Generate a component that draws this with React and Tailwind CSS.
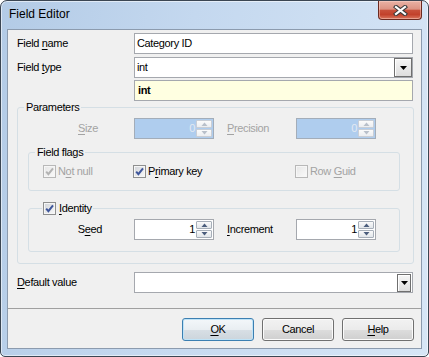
import React from "react";

function U({ children }) {
  return <span className="underline decoration-1 underline-offset-[2px]">{children}</span>;
}

function CloseBtn() {
  return (
    <div className="w-[44px] h-[19px] rounded-b-[4px] border border-t-0 border-[#6b2a20] bg-[linear-gradient(to_bottom,#e9b2a5_0%,#dc9383_45%,#c8503a_52%,#c2412b_75%,#d9755d_100%)] shadow-[inset_0_0_0_1px_rgba(255,220,210,0.45)] flex items-center justify-center">
      <svg width="15" height="11" viewBox="0 0 15 11">
        <path d="M3 2 L12 9 M12 2 L3 9" stroke="#3a3a3a" strokeWidth="4.2" strokeLinecap="square" />
        <path d="M3 2 L12 9 M12 2 L3 9" stroke="#ffffff" strokeWidth="2.2" strokeLinecap="square" />
      </svg>
    </div>
  );
}

function DropBtn({ small }) {
  return (
    <div
      className={`${small ? "w-[14px] h-[18px] mt-[1px] mr-[1px]" : "w-[18px] h-full"} shrink-0 border border-[#6f6f6f] bg-[linear-gradient(to_bottom,#f6f6f6,#dddddd)] shadow-[inset_1px_1px_0_#ffffff] flex items-center justify-center`}
    >
      <svg width="7" height="4" viewBox="0 0 7 4">
        <path d="M0 0 H7 L3.5 4 Z" fill="#000" />
      </svg>
    </div>
  );
}

function SpinBtn({ up, disabled }) {
  return (
    <div
      className={`h-[8px] border rounded-[1px] flex items-center justify-center ${
        disabled
          ? "border-[#c9ced6] bg-[linear-gradient(to_bottom,#fbfbfb,#eceef1)]"
          : "border-[#a7afb9] bg-[linear-gradient(to_bottom,#fafafa,#e2e6ea)]"
      }`}
    >
      <svg width="7" height="4" viewBox="0 0 7 4">
        <path d={up ? "M0.5 4 H6.5 L3.5 0.5 Z" : "M0.5 0 H6.5 L3.5 3.5 Z"} fill={disabled ? "#b9c0ca" : "#4b5d7c"} />
      </svg>
    </div>
  );
}

function Spinner({ value, disabled }) {
  return (
    <div
      className={`w-[80px] h-[21px] shrink-0 border flex ${
        disabled ? "border-[#a3adb9] bg-[#afcdee]" : "border-[#a5a8ae] bg-white"
      }`}
    >
      <div className={`flex-1 flex items-center justify-end pr-[1px] ${disabled ? "text-[#e2e9f2]" : "text-black"}`}>
        {value}
      </div>
      <div className="w-[16px] flex flex-col gap-[1px] my-[1px] mr-[1px]">
        <SpinBtn up disabled={disabled} />
        <SpinBtn disabled={disabled} />
      </div>
    </div>
  );
}

function Check({ checked, disabled }) {
  return (
    <span
      className={`w-[13px] h-[13px] shrink-0 border flex items-center justify-center ${
        disabled
          ? "border-[#b8b8b8] bg-[linear-gradient(135deg,#e6e6e6,#fafafa)]"
          : "border-[#8e8f8f] bg-[linear-gradient(135deg,#d0d3d8,#fafafa)]"
      } shadow-[inset_0_0_0_1px_#f6f6f6]`}
    >
      {checked && (
        <svg width="11" height="11" viewBox="0 0 11 11">
          <path
            d="M2.2 5.6 L4.4 8.2 L9 2.4"
            fill="none"
            stroke={disabled ? "#b3b3b3" : "#3e569b"}
            strokeWidth="2"
          />
        </svg>
      )}
    </span>
  );
}

function Button({ children, focused }) {
  return (
    <div
      className={`w-[72px] h-[23px] rounded-[3px] border flex items-center justify-center ${
        focused
          ? "border-[#3c7fb1] shadow-[inset_0_0_0_1px_#bfe3f7] bg-[linear-gradient(to_bottom,#f3f7fa_0%,#e9eef2_50%,#d8dfe5_51%,#ccd5dc_100%)]"
          : "border-[#707070] shadow-[inset_0_0_0_1px_#fbfbfb] bg-[linear-gradient(to_bottom,#f2f2f2_0%,#ebebeb_50%,#dddddd_51%,#cfcfcf_100%)]"
      }`}
    >
      {children}
    </div>
  );
}

export default function App() {
  return (
    <div className="w-[429px] h-[357px] font-['Liberation_Sans',Arial,sans-serif] text-[11px] leading-[13px] text-black tracking-[-0.35px]">
      <div className="w-full h-full flex flex-col rounded-t-[7px] rounded-b-[5px] border border-[#3b4653] bg-[linear-gradient(100deg,#b3cbe6_0%,#c4d8ef_40%,#d7e6f6_100%)] shadow-[inset_0_0_0_1px_rgba(255,255,255,0.55)]">
        <div className="h-[28px] shrink-0 flex items-start justify-between pl-[8px] pr-[6px]">
          <span className="mt-[6px] text-[12px] leading-[14px] tracking-normal">Field Editor</span>
          <CloseBtn />
        </div>
        <div className="mx-[6px] h-[320px] border border-[#8c9bae] bg-[#f0f0f0] flex flex-col pl-[9px] pr-[7px] pt-[3px]">
          <div className="flex items-center h-[21px]">
            <div className="w-[117px]">
              Field <U>n</U>ame
            </div>
            <div className="w-[279px] h-[21px] border border-[#a5a8ae] bg-white flex items-center pl-[2px]">Category ID</div>
          </div>

          <div className="flex items-center h-[21px] mt-[3px]">
            <div className="w-[117px]">
              Field <U>t</U>ype
            </div>
            <div className="w-[279px] h-[21px] border border-[#a5a8ae] bg-white flex items-stretch">
              <div className="flex-1 flex items-center pl-[2px]">int</div>
              <DropBtn />
            </div>
          </div>

          <div className="ml-[117px] mt-[2px] w-[279px] h-[21px] border border-[#a5a8ae] bg-[#ffffe1] flex items-center pl-[3px] font-bold">
            int
          </div>

          <fieldset className="w-[397px] border border-[#d5dfe5] rounded-[3px] pl-[6px] pb-[11px]">
            <legend className="px-[2px] leading-[13px]">Parameters</legend>
            <div className="flex items-center h-[21px] mt-[4px]">
              <div className="w-[74px] text-right text-[#a3a3a3]">
                <U>S</U>ize
              </div>
              <div className="ml-[36px]">
                <Spinner value="0" disabled />
              </div>
              <div className="ml-[13px] w-[69px] text-[#a3a3a3]">
                <U>P</U>recision
              </div>
              <Spinner value="0" disabled />
            </div>

            <fieldset className="mt-[7px] ml-[4px] w-[372px] border border-[#d5dfe5] rounded-[3px] pl-[6px] pb-[11px]">
              <legend className="px-[2px] leading-[13px]">Field flags</legend>
              <div className="flex items-center h-[15px] mt-[5px] ml-[8px]">
                <div className="w-[90px] flex items-center gap-[2px] text-[#a3a3a3]">
                  <Check checked disabled />
                  <span>
                    N<U>o</U>t null
                  </span>
                </div>
                <div className="w-[162px] flex items-center gap-[2px]">
                  <Check checked />
                  <span>
                    P<U>r</U>imary key
                  </span>
                </div>
                <div className="flex items-center gap-[2px] text-[#a3a3a3]">
                  <Check disabled />
                  <span>
                    Row <U>G</U>uid
                  </span>
                </div>
              </div>
            </fieldset>

            <fieldset className="mt-[11px] ml-[4px] w-[372px] border border-[#d5dfe5] rounded-[3px] pl-[13px] pb-[11px]">
              <legend className="px-[1px] leading-[13px]">
                <span className="flex items-center gap-[3px]">
                  <Check checked />
                  <span>
                    <U>I</U>dentity
                  </span>
                </span>
              </legend>
              <div className="flex items-center h-[21px] mt-[4px]">
                <div className="w-[60px] text-right">
                  S<U>e</U>ed
                </div>
                <div className="ml-[32px]">
                  <Spinner value="1" />
                </div>
                <div className="ml-[13px] w-[69px]">
                  <U>I</U>ncrement
                </div>
                <Spinner value="1" />
              </div>
            </fieldset>
          </fieldset>

          <div className="flex items-center h-[21px] mt-[8px]">
            <div className="w-[117px]">
              <U>D</U>efault value
            </div>
            <div className="w-[279px] h-[21px] border border-[#a5a8ae] bg-white flex items-start">
              <div className="flex-1" />
              <DropBtn small />
            </div>
          </div>

          <div className="h-px bg-[#a0a0a0] mt-[15px] -ml-[9px] -mr-[7px]" />

          <div className="flex justify-end gap-[8px] mt-[9px]">
            <Button focused>
              <U>O</U>K
            </Button>
            <Button>Cancel</Button>
            <Button>
              <U>H</U>elp
            </Button>
          </div>
        </div>
      </div>
    </div>
  );
}
